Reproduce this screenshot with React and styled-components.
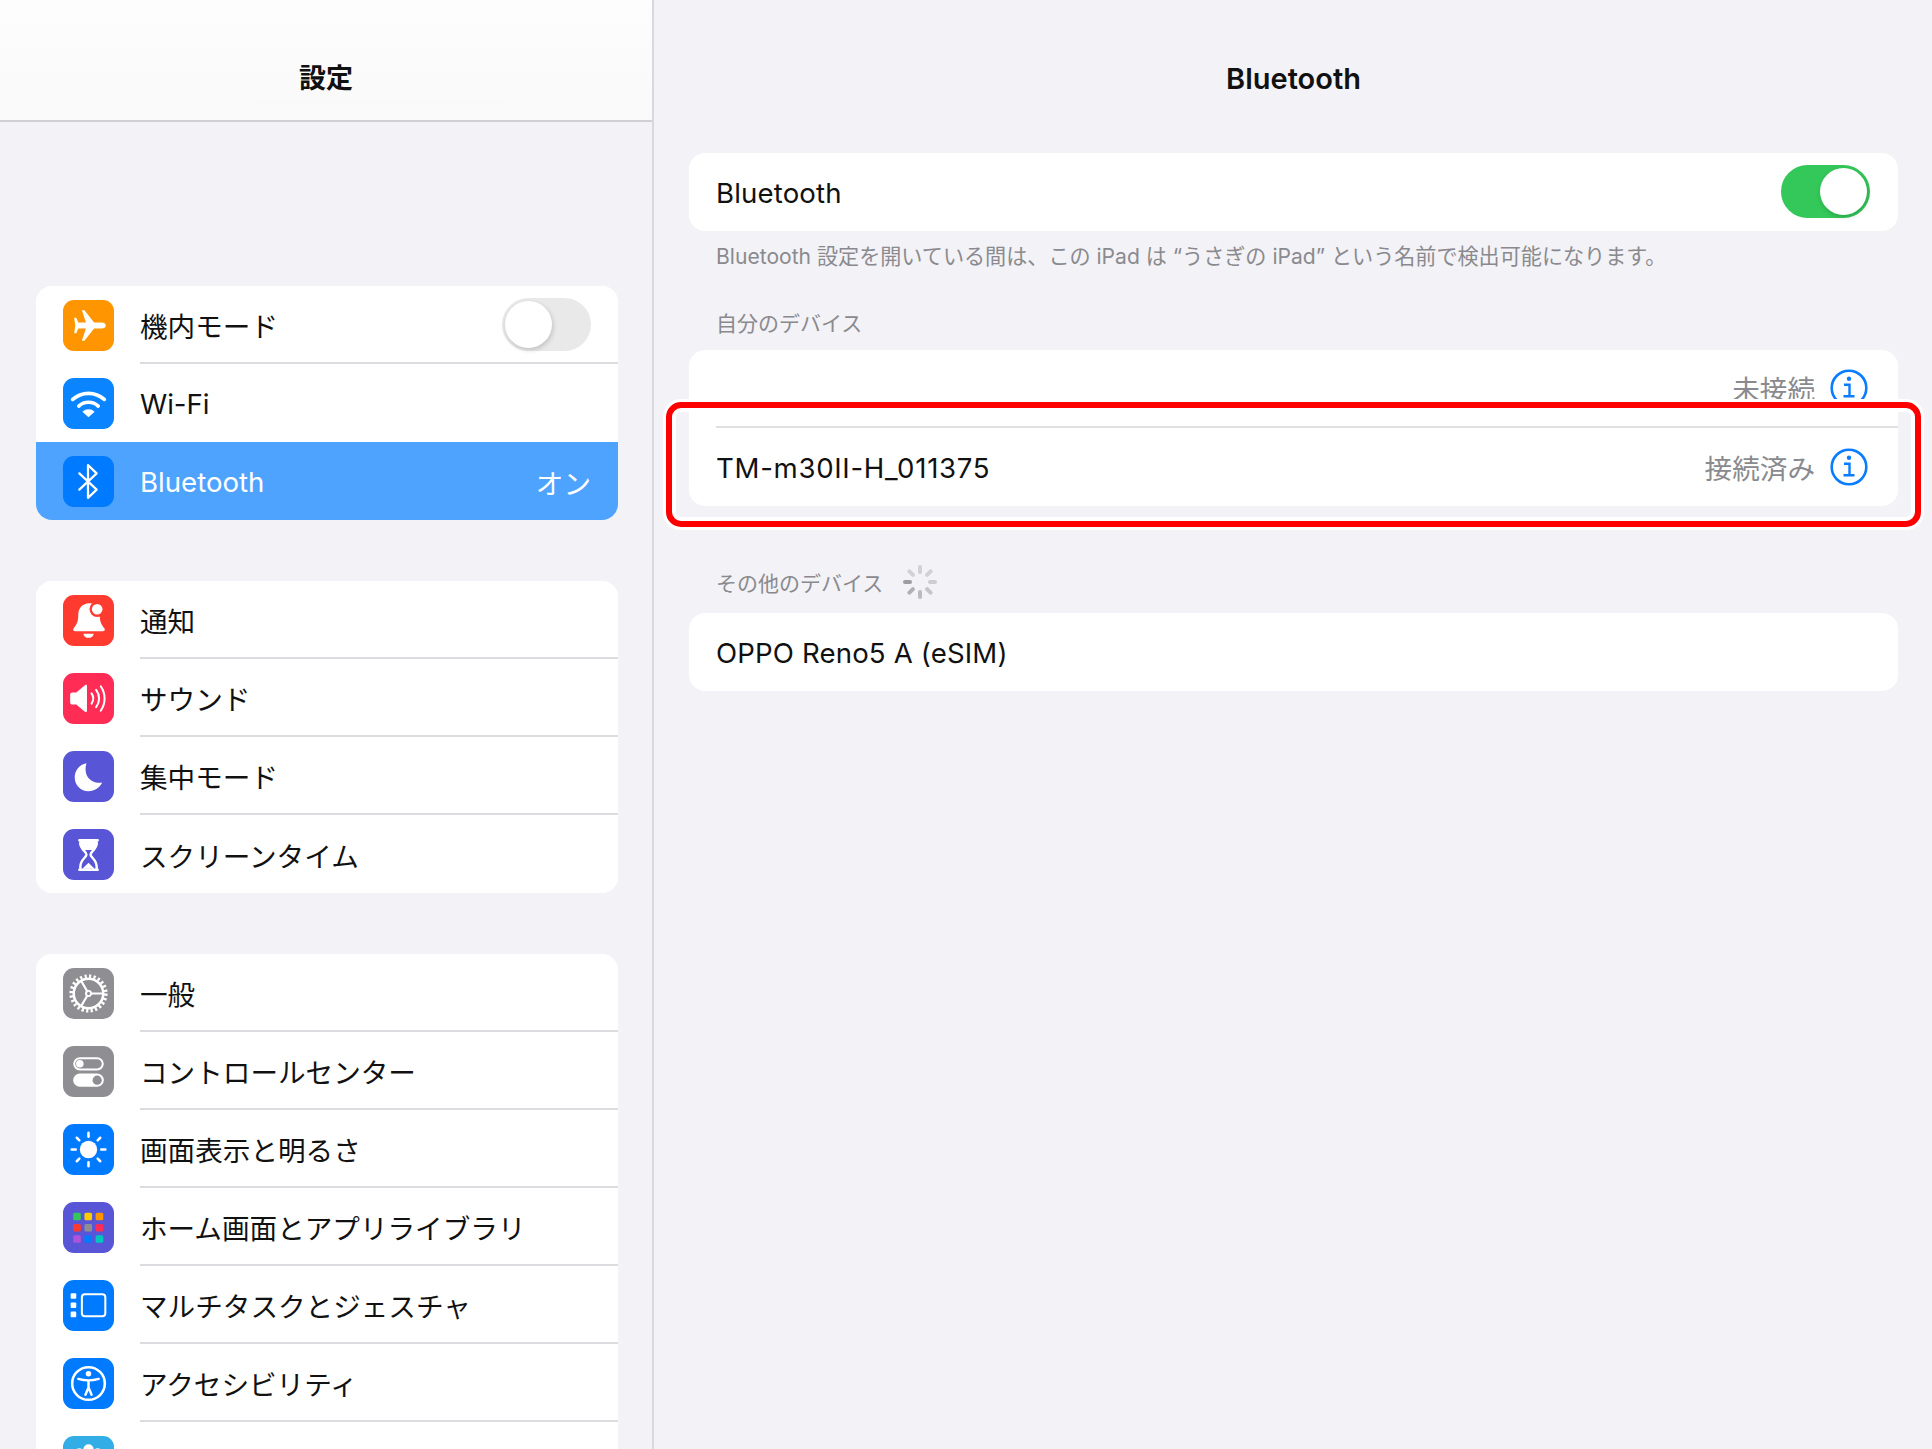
import React from 'react';
import styled, {createGlobalStyle} from 'styled-components';

const FONT = `Inter, "Noto Sans CJK JP", sans-serif`;

const GlobalStyle = createGlobalStyle`
    html, body {
        margin: 0;
        padding: 0;
        background: #f2f2f7;
    }
    * {
        box-sizing: border-box;
    }
`;

const Screen = styled.div`
    display: flex;
    width: 1932px;
    height: 1449px;
    overflow: hidden;
    background: #f2f2f7;
    font-family: ${FONT};
    color: #111;
`;

const Sidebar = styled.aside`
    flex: 0 0 654px;
    height: 100%;
    overflow: hidden;
    border-right: 2px solid #d9d9dd;
`;

const SidebarHeader = styled.header`
    display: flex;
    justify-content: center;
    height: 122px;
    padding-top: 59px;
    background: linear-gradient(#fdfdfd, #f9f9f9);
    border-bottom: 2px solid #d0d0d4;
    font-size: 27px;
    line-height: 40px;
    font-weight: 700;
`;

const Groups = styled.div`
    display: flex;
    flex-direction: column;
    gap: 61px;
    padding: 164px 34px 0 36px;
`;

const Group = styled.div`
    flex: none;
    border-radius: 16px;
    overflow: hidden;
    background: #fff;
`;

const Row = styled.div`
    display: flex;
    align-items: center;
    gap: 26px;
    height: 78px;
    padding-left: 27px;
    background: ${p => (p.$active ? '#4ea3ff' : '#fff')};
    color: ${p => (p.$active ? '#fff' : '#111')};
`;

const IconBox = styled.div`
    flex: 0 0 51px;
    height: 51px;
    border-radius: 11px;
    background: ${p => p.$bg};
    svg {
        display: block;
        width: 51px;
        height: 51px;
    }
`;

const RowBody = styled.div`
    flex: 1;
    display: flex;
    align-items: center;
    justify-content: space-between;
    height: 100%;
    padding-right: 27px;
    font-size: 27.6px;
    border-bottom: ${p => (p.$line ? '2px solid #dcdce0' : 'none')};
`;

const Label = styled.span`
    padding-top: 2px;
    letter-spacing: ${p => p.$spacing || 'normal'};
`;

const Toggle = styled.div`
    position: relative;
    flex: none;
    width: 89px;
    height: 53px;
    margin-top: ${p => (p.$on ? '-1px' : '0')};
    border-radius: 27px;
    background: ${p => (p.$on ? '#34c759' : '#e9e9ea')};
    &::after {
        content: '';
        position: absolute;
        top: 3px;
        left: ${p => (p.$on ? '39px' : '3px')};
        width: 47px;
        height: 47px;
        border-radius: 50%;
        background: #fff;
        box-shadow: 1px 2px 5px rgba(0, 0, 0, 0.18);
    }
`;

const Detail = styled.div`
    flex: 1;
    min-width: 0;
    height: 100%;
    display: flex;
    flex-direction: column;
`;

const Main = styled.main`
    flex: 1;
    padding: 0 34px 0 35px;
`;

const MainTitle = styled.h1`
    margin: 0;
    height: 153px;
    padding-top: 59px;
    text-align: center;
    font-size: 29px;
    line-height: 40px;
    font-weight: 600;
`;

const Card = styled.section`
    position: relative;
    background: #fff;
    border-radius: 16px;
`;

const CardRow = styled.div`
    display: flex;
    align-items: center;
    justify-content: space-between;
    height: 78px;
    margin-left: 27px;
    padding-right: 28px;
    font-size: 27.6px;
    border-bottom: ${p => (p.$line ? '2px solid #e0e0e3' : 'none')};
`;

const Note = styled.p`
    margin: 11px 0 0 27px;
    font-size: 21.1px;
    line-height: 30px;
    color: #8a8a8e;
`;

const SectionLabel = styled.div`
    display: flex;
    align-items: center;
    gap: 19px;
    height: 30px;
    margin: ${p => p.$margin};
    padding-left: 27px;
    font-size: 21px;
    color: #8a8a8e;
`;

const Status = styled.div`
    display: flex;
    align-items: center;
    gap: 15px;
    margin-right: 2px;
    font-size: 27.6px;
    color: #8a8a8e;
`;

const Highlight = styled.div`
    position: absolute;
    top: 52px;
    left: -23px;
    right: -23px;
    bottom: -21px;
    border: 6px solid #ff0000;
    border-radius: 15px;
    box-shadow: 0 0 0 3px #fff, inset 0 0 0 4px #fff;
    pointer-events: none;
`;

const W = {fill: 'none', stroke: '#fff', strokeLinecap: 'round', strokeLinejoin: 'round'};

const Plane = () => (
    <svg viewBox="0 0 50 50">
        <path fill="#fff" d="M42 25c0-1.800-2-3-4-3h-7.500L21 10h-2.500l4 12H15l-2-4.500h-2L12 25l-1 7.500h2l2-4.500h7.500l-4 12H21l9.500-12H38c2 0 4-1.200 4-3z" />
    </svg>
);

const Wifi = () => (
    <svg viewBox="0 0 50 50">
        <path {...W} strokeWidth="3.600" d="M9.500 21a23 23 0 0 1 31 0M15.500 27.500a14 14 0 0 1 19 0" />
        <path fill="#fff" d="M25 38.500l-6-5.500a9 9 0 0 1 12 0z" />
    </svg>
);

const BluetoothGlyph = () => (
    <svg viewBox="0 0 50 50">
        <path {...W} strokeWidth="2.200" d="M16 17l17 16-8.500 8V9l8.500 8-17 16" />
    </svg>
);

const Bell = () => (
    <svg viewBox="0 0 50 50">
        <path fill="#fff" d="M26 8c-7 0-11 5-11 11 0 8-2 10-4.500 13.500-1 1.500-.5 3 1.500 3h27c2 0 2.500-1.500 1.500-3-2.500-3.500-4.500-5.500-4.500-13.500 0-6-3-11-10-11z" />
        <path fill="#fff" d="M20 38h10a5 4 0 0 1-10 0z" />
        <circle cx="33.500" cy="14" r="7.500" fill="#ff3b30" />
        <circle cx="33.500" cy="14" r="5.200" fill="#fff" />
    </svg>
);

const Speaker = () => (
    <svg viewBox="0 0 50 50">
        <path fill="#fff" d="M9 19h4l8.500-7c1-.8 2-.3 2 1v24c0 1.300-1 1.800-2 1L13 31H9c-1 0-2-.8-2-2v-8c0-1.200 1-2 2-2z" />
        <path {...W} strokeWidth="2" d="M28 20a9 9 0 0 1 0 10M32.500 16.500a14 14 0 0 1 0 17M37 13a21 21 0 0 1 0 24" />
    </svg>
);

const Moon = () => (
    <svg viewBox="0 0 50 50">
        <path fill="#fff" d="M23 12C16 13.500 11.500 19 11.500 26c0 7.500 6 13.500 13.500 13.500 6 0 11-3.500 13.500-8.500C27 32.500 19.500 24 23 12z" />
    </svg>
);

const Hourglass = () => (
    <svg viewBox="0 0 50 50">
        <path {...W} strokeWidth="2.400" d="M16 11h18M16 40h18M17 14c0 6 6 8 6 11s-6 5-6 12v3M33 14c0 6-6 8-6 11s6 5 6 12v3" />
        <path fill="#fff" d="M16 11h18v3c0 3-2 5-4 6.500H20c-2-1.500-4-3.500-4-6.500zM19 39l6-6 6 6z" />
    </svg>
);

const Gear = () => (
    <svg viewBox="0 0 50 50">
        <circle {...W} strokeLinecap="butt" strokeWidth="3.500" strokeDasharray="2.200 2.250" cx="25" cy="25" r="17" />
        <circle {...W} strokeWidth="2.500" cx="25" cy="25" r="14.500" />
        <path {...W} strokeWidth="2.200" d="M27.500 25H39M23.750 22.830L18 13M23.750 27.170L18 37" />
        <circle {...W} strokeWidth="1.800" cx="25" cy="25" r="2.500" />
    </svg>
);

const Switches = () => (
    <svg viewBox="0 0 50 50">
        <rect {...W} strokeWidth="2" x="11" y="12" width="28" height="11" rx="5.500" />
        <circle cx="16.500" cy="17.500" r="3.700" fill="#fff" />
        <rect x="10" y="27" width="30" height="13" rx="6.500" fill="#fff" />
        <circle cx="33.500" cy="33.500" r="4.500" fill="#8e8e93" />
    </svg>
);

const Sun = () => (
    <svg viewBox="0 0 50 50">
        <circle cx="25" cy="25" r="8.500" fill="#fff" />
        <path {...W} strokeWidth="2.500" d="M25 8.500v4M25 37.500v4M8.500 25h4M37.500 25h4M13.500 13.500l2.500 2.500M34 34l2.500 2.500M13.500 36.500L16 34M34 16l2.500-2.500" />
    </svg>
);

const GRID = ['#34c759', '#ffcc00', '#ff9500', '#ff3b30', '#8e8e93', '#ff2d55', '#af52de', '#007aff', '#00c7be'];

const HomeGrid = () => (
    <svg viewBox="0 0 50 50">
        {GRID.map((c, i) => (
            <rect key={c} x={10 + (i % 3) * 11} y={10.5 + Math.floor(i / 3) * 11} width="7.500" height="7.500" rx="1.500" fill={c} />
        ))}
    </svg>
);

const Multitask = () => (
    <svg viewBox="0 0 50 50">
        <rect x="7.500" y="13" width="5.500" height="5.500" rx="1" fill="#fff" />
        <rect x="7.500" y="22" width="5.500" height="5.500" rx="1" fill="#fff" />
        <rect x="7.500" y="31" width="5.500" height="5.500" rx="1" fill="#fff" />
        <rect {...W} strokeWidth="2" x="18.500" y="14" width="23" height="21.500" rx="3" />
    </svg>
);

const Accessibility = () => (
    <svg viewBox="0 0 50 50">
        <circle {...W} strokeWidth="2.500" cx="25" cy="25" r="16" />
        <circle cx="25" cy="15.500" r="2.700" fill="#fff" />
        <path {...W} strokeWidth="2.400" d="M15 20.500c7 2 13 2 20 0M25 22v7M25 29l-3 7M25 29l3 7" />
    </svg>
);

const Flower = () => (
    <svg viewBox="0 0 50 50">
        <circle cx="25" cy="13" r="5" fill="#fff" />
        <circle cx="16" cy="17" r="5" fill="#fff" />
        <circle cx="34" cy="17" r="5" fill="#fff" />
    </svg>
);

const InfoIcon = () => (
    <svg width="38" height="38" viewBox="0 0 38 38">
        <circle cx="19" cy="19" r="17.300" fill="none" stroke="#0a7cff" strokeWidth="2.600" />
        <circle cx="19" cy="9.700" r="2.200" fill="#0a7cff" />
        <path fill="none" stroke="#0a7cff" strokeWidth="2.400" d="M14 15.700h5.500v12M13.500 27.300h11" />
    </svg>
);

const SPOKES = [0.65, 0.5, 0.42, 0.34, 0.28, 0.25, 0.25, 0.25];

const Spinner = () => (
    <svg width="36" height="36" viewBox="-18 -18 36 36">
        {SPOKES.map((o, i) => (
            <rect key={i} x="8" y="-2" width="9" height="4" rx="2" fill="#6e6e73" opacity={o} transform={`rotate(${180 - i * 45})`} />
        ))}
    </svg>
);

const GROUPS = [
    [
        {label: '機内モード', bg: '#ff9500', Icon: Plane, toggle: true},
        {label: 'Wi-Fi', bg: '#0a84ff', Icon: Wifi, noLine: true},
        {label: 'Bluetooth', bg: '#007aff', Icon: BluetoothGlyph, value: 'オン', active: true},
    ],
    [
        {label: '通知', bg: '#ff3b30', Icon: Bell},
        {label: 'サウンド', bg: '#ff2d55', Icon: Speaker},
        {label: '集中モード', bg: '#5856d6', Icon: Moon},
        {label: 'スクリーンタイム', bg: '#5856d6', Icon: Hourglass},
    ],
    [
        {label: '一般', bg: '#8e8e93', Icon: Gear},
        {label: 'コントロールセンター', bg: '#8e8e93', Icon: Switches},
        {label: '画面表示と明るさ', bg: '#007aff', Icon: Sun},
        {label: 'ホーム画面とアプリライブラリ', bg: '#5856d6', Icon: HomeGrid},
        {label: 'マルチタスクとジェスチャ', bg: '#007aff', Icon: Multitask},
        {label: 'アクセシビリティ', bg: '#007aff', Icon: Accessibility},
        {label: '', bg: '#32ade6', Icon: Flower},
    ],
];

export default function App() {
    return (
        <Screen>
            <GlobalStyle />
            <Sidebar>
                <SidebarHeader>設定</SidebarHeader>
                <Groups>
                    {GROUPS.map((rows, g) => (
                        <Group key={g}>
                            {rows.map((r, i) => (
                                <Row key={r.label} $active={r.active}>
                                    <IconBox $bg={r.bg}><r.Icon /></IconBox>
                                    <RowBody $line={i < rows.length - 1 && !r.noLine}>
                                        <Label>{r.label}</Label>
                                        {r.toggle && <Toggle />}
                                        {r.value && <Label>{r.value}</Label>}
                                    </RowBody>
                                </Row>
                            ))}
                        </Group>
                    ))}
                </Groups>
            </Sidebar>
            <Main>
                <Detail>
                    <MainTitle>Bluetooth</MainTitle>
                    <Card>
                        <CardRow>
                            <Label $spacing="0.15px">Bluetooth</Label>
                            <Toggle $on />
                        </CardRow>
                    </Card>
                    <Note>Bluetooth 設定を開いている間は、この iPad は “うさぎの iPad” という名前で検出可能になります。</Note>
                    <SectionLabel $margin="35px 0 13px">自分のデバイス</SectionLabel>
                    <Card>
                        <CardRow $line>
                            <span />
                            <Status>未接続<InfoIcon /></Status>
                        </CardRow>
                        <CardRow>
                            <Label $spacing="0.7px">TM-m30II-H_011375</Label>
                            <Status>接続済み<InfoIcon /></Status>
                        </CardRow>
                        <Highlight />
                    </Card>
                    <SectionLabel $margin="61px 0 16px">その他のデバイス<Spinner /></SectionLabel>
                    <Card>
                        <CardRow><Label $spacing="0.15px">OPPO Reno5 A (eSIM)</Label></CardRow>
                    </Card>
                </Detail>
            </Main>
        </Screen>
    );
}
